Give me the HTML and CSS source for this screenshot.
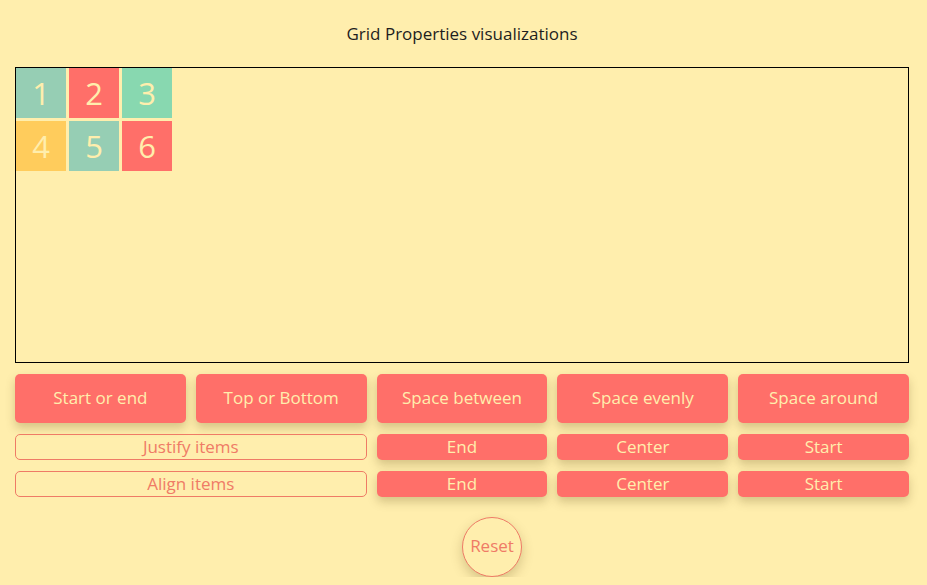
FILE: index.html
```html
<!DOCTYPE html>
<html>
<head>
<meta charset="utf-8">
<title>Grid Properties visualizations</title>
<link rel="stylesheet" href="styles.css">
</head>
<body>
  <h1 class="title">Grid Properties visualizations</h1>
  <div class="stage">
    <div class="item sage">1</div>
    <div class="item coral">2</div>
    <div class="item mint">3</div>
    <div class="item yellow">4</div>
    <div class="item sage">5</div>
    <div class="item coral">6</div>
  </div>
  <div class="controls">
    <button class="btn big">Start or end</button>
    <button class="btn big">Top or Bottom</button>
    <button class="btn big">Space between</button>
    <button class="btn big">Space evenly</button>
    <button class="btn big">Space around</button>

    <div class="label">Justify items</div>
    <button class="btn small">End</button>
    <button class="btn small">Center</button>
    <button class="btn small">Start</button>

    <div class="label">Align items</div>
    <button class="btn small">End</button>
    <button class="btn small">Center</button>
    <button class="btn small">Start</button>
  </div>
  <div class="reset-row">
    <button class="reset">Reset</button>
  </div>
</body>
</html>
```
FILE: styles.css
```css
* { box-sizing: border-box; }

html, body {
  margin: 0;
  background: #ffeead;
}

body {
  padding: 0 18px 0 15px;
  font-family: "Open Sans", "DejaVu Sans", sans-serif;
  color: #222;
}

.title {
  margin: 0;
  padding-top: 22px;
  height: 67px;
  font-size: 17px;
  line-height: 24px;
  font-weight: 400;
  text-align: center;
  color: #1e1e1e;
}

.stage {
  height: 296px;
  border: 1px solid #000;
  display: grid;
  grid-template-columns: repeat(3, 50px);
  grid-auto-rows: 50px;
  gap: 3px;
  align-content: start;
}

.item {
  display: flex;
  align-items: center;
  justify-content: center;
  font-size: 31px;
  color: #ffeead;
}

.sage { background: #96ceb4; }
.coral { background: #ff6f69; }
.mint { background: #88d8b0; }
.yellow { background: #ffcc5c; }

.controls {
  margin-top: 11px;
  display: grid;
  grid-template-columns: repeat(5, 1fr);
  grid-template-rows: 49px 26px 26px;
  column-gap: 10px;
  row-gap: 11px;
}

.btn {
  font-family: inherit;
  font-size: 17px;
  color: #ffeead;
  background: #ff6f69;
  border: none;
  border-radius: 5px;
  box-shadow: 0 5px 10px rgba(90, 70, 20, 0.25);
  padding: 0 0 3px;
}

.btn.small {
  padding-bottom: 2px;
}

.label {
  grid-column: span 2;
  border: 1px solid #ef7b66;
  border-radius: 5px;
  color: #ef7b66;
  font-size: 17px;
  display: flex;
  align-items: center;
  justify-content: center;
  padding-bottom: 2px;
}

.reset-row {
  padding-left: 50%;
  margin-top: 20px;
}

.reset {
  width: 60px;
  height: 60px;
  border-radius: 50%;
  border: 1px solid #ef7b66;
  background: #ffeead;
  color: #ef7b66;
  font-family: inherit;
  font-size: 17px;
  padding: 0 0 3px;
  box-shadow: 0 5px 12px rgba(90, 70, 20, 0.25);
}
```
